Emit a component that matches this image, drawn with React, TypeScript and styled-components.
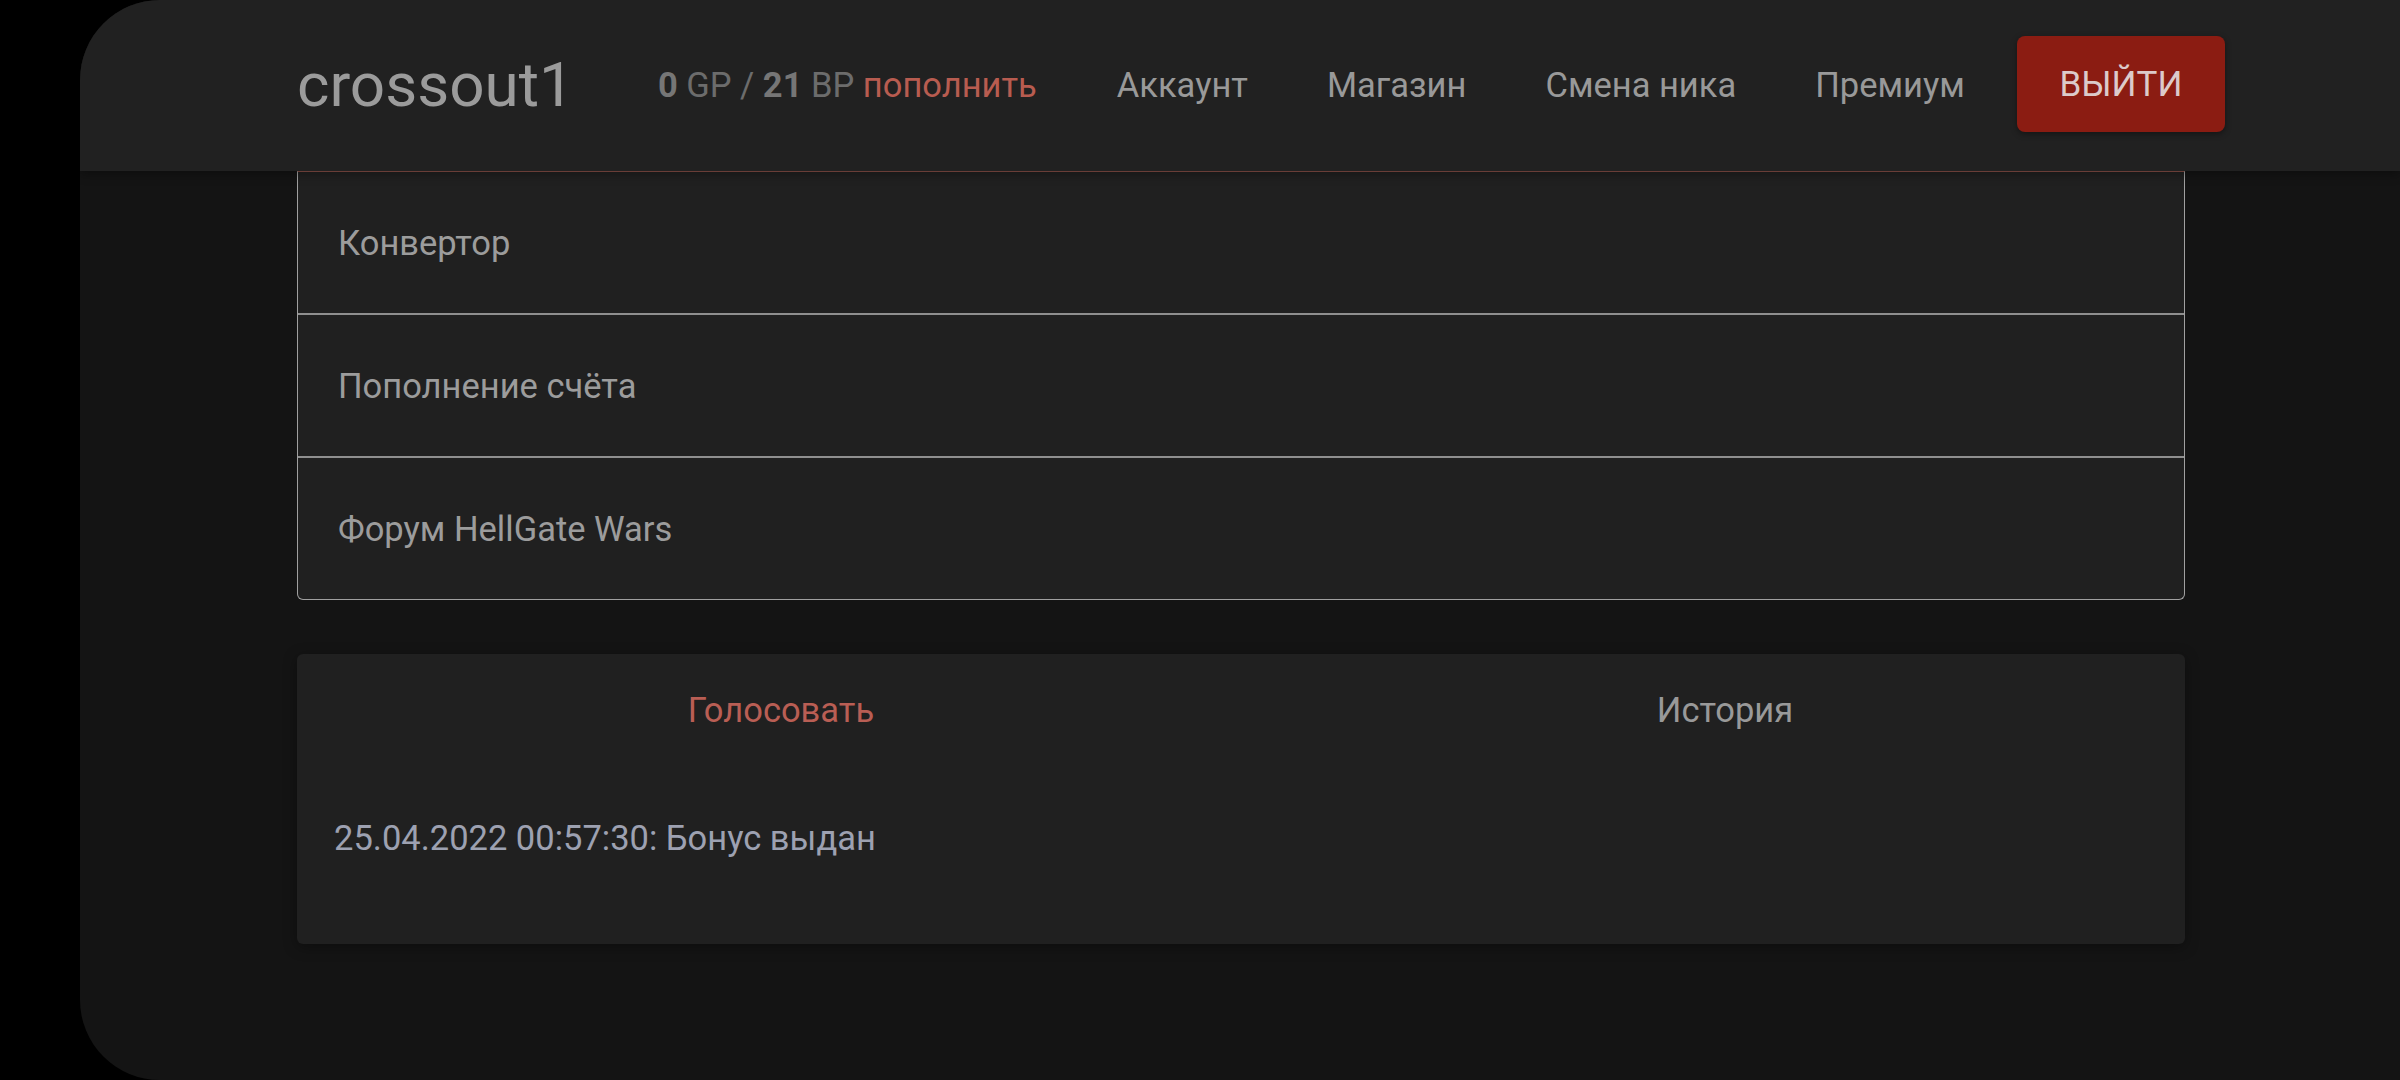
import React, { useState } from 'react';
import styled, { createGlobalStyle } from 'styled-components';

const GlobalStyle = createGlobalStyle`
  html, body {
    margin: 0;
    padding: 0;
    background: #000;
    overflow: hidden;
  }
  body {
    font-family: Roboto, "Liberation Sans", sans-serif;
  }
`;

const Frame = styled.div`
  margin-left: 80px;
  height: 1080px;
  background: #141414;
  border-radius: 80px 0 0 80px;
  overflow: hidden;
  display: flex;
  flex-direction: column;
`;

const Header = styled.header`
  height: 171px;
  flex-shrink: 0;
  background: #212121;
  box-shadow: 0 3px 10px rgba(0, 0, 0, 0.35);
  display: flex;
  align-items: center;
  padding: 0 175px 2px 217px;
  box-sizing: border-box;
  position: relative;
  z-index: 1;
`;

const Logo = styled.a`
  font-size: 62px;
  color: #9b9b9b;
  text-decoration: none;
  margin-right: 84px;
  line-height: 1;
`;

const Balance = styled.div`
  font-size: 34.5px;
  color: #6c6c6c;
  margin-right: 80px;
  white-space: nowrap;
`;

const Amount = styled.b`
  font-weight: 700;
  color: #767676;
`;

const TopUp = styled.a`
  color: #b85c50;
  text-decoration: none;
`;

const Nav = styled.nav`
  display: flex;
  align-items: center;
  gap: 79px;
  flex: 1;
`;

const NavLink = styled.a`
  font-size: 34.5px;
  color: #999;
  text-decoration: none;
  white-space: nowrap;
`;

const LogoutButton = styled.button`
  width: 208px;
  height: 96px;
  border: none;
  border-radius: 8px;
  background: #8b1c12;
  color: #dccaca;
  font-family: inherit;
  font-size: 35px;
  text-transform: uppercase;
  box-shadow: 0 2px 6px rgba(0, 0, 0, 0.4);
  cursor: pointer;
  margin-top: -1px;
`;

const Main = styled.main`
  padding: 0 0 0 217px;
  width: 1888px;
  display: flex;
  flex-direction: column;
  gap: 54px;
`;

const LinkList = styled.div`
  background: #202020;
  border: 1px solid #a0a0a0;
  border-top-color: #8a5048;
  border-radius: 0 0 6px 6px;
  display: flex;
  flex-direction: column;
`;

const ListItem = styled.a<{ $last?: boolean }>`
  height: 141px;
  display: flex;
  align-items: center;
  padding-left: 40px;
  font-size: 34.5px;
  color: #9c9c9c;
  text-decoration: none;
  border-bottom: ${p => (p.$last ? 'none' : '2px solid #8f8f8f')};
`;

const Card = styled.section`
  background: #202020;
  border-radius: 6px;
  box-shadow: 0 3px 14px rgba(0, 0, 0, 0.35);
  height: 290px;
  box-sizing: border-box;
  padding-top: 36px;
  display: flex;
  flex-direction: column;
`;

const Tabs = styled.div`
  display: grid;
  grid-template-columns: 1fr 1fr;
  margin: 0 -12px 0 12px;
`;

const Tab = styled.button<{ $active?: boolean }>`
  background: none;
  border: none;
  padding: 0;
  font-family: inherit;
  font-size: 34.5px;
  line-height: normal;
  color: ${p => (p.$active ? '#b95e54' : '#999')};
  text-align: center;
  cursor: pointer;
`;

const HistoryEntry = styled.div`
  margin-top: 88px;
  padding-left: 37px;
  font-size: 34.5px;
  color: #9da1b1;
`;

const links = ['Конвертор', 'Пополнение счёта', 'Форум HellGate Wars'];

const App: React.FC = () => {
  const [tab, setTab] = useState('vote');

  return (
    <>
      <GlobalStyle />
      <Frame>
        <Header>
          <Logo href="#">crossout1</Logo>
          <Balance>
            <Amount>0</Amount> GP / <Amount>21</Amount> BP <TopUp href="#">пополнить</TopUp>
          </Balance>
          <Nav>
            <NavLink href="#">Аккаунт</NavLink>
            <NavLink href="#">Магазин</NavLink>
            <NavLink href="#">Смена ника</NavLink>
            <NavLink href="#">Премиум</NavLink>
          </Nav>
          <LogoutButton>Выйти</LogoutButton>
        </Header>
        <Main>
          <LinkList>
            {links.map((l, i) => (
              <ListItem key={l} href="#" $last={i === links.length - 1}>{l}</ListItem>
            ))}
          </LinkList>
          <Card>
            <Tabs>
              <Tab $active={tab === 'vote'} onClick={() => setTab('vote')}>Голосовать</Tab>
              <Tab $active={tab === 'history'} onClick={() => setTab('history')}>История</Tab>
            </Tabs>
            <HistoryEntry>25.04.2022 00:57:30: Бонус выдан</HistoryEntry>
          </Card>
        </Main>
      </Frame>
    </>
  );
};

export default App;
